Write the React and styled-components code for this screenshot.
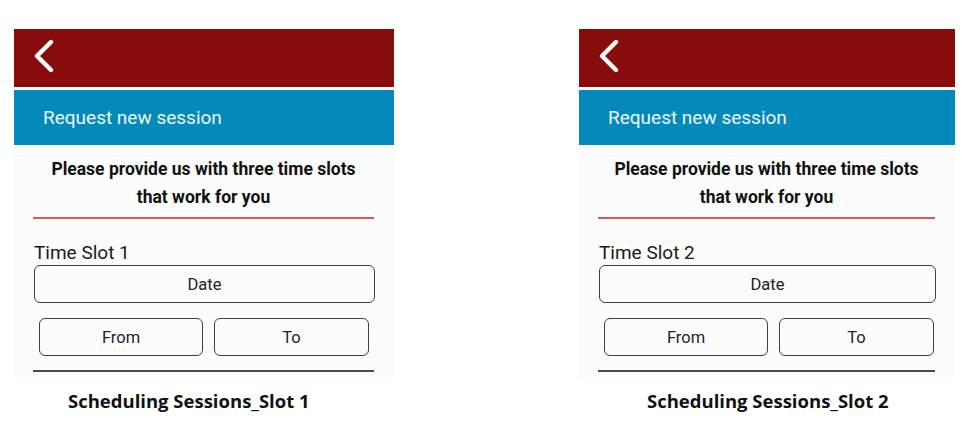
import React from "react";
import styled, { createGlobalStyle } from "styled-components";

const GlobalStyle = createGlobalStyle`
  body {
    margin: 0;
    background: #fff;
    font-family: Roboto, "Liberation Sans", Arial, sans-serif;
  }
`;

const slots = [
  { id: 1, width: 380, left: 14, captionLeft: 54 },
  { id: 2, width: 376, left: 185, captionLeft: 68 },
];

function BackIcon() {
  return (
    <svg width="24" height="34" viewBox="0 0 24 34">
      <path
        d="M18 3 L4 17 L18 31"
        fill="none"
        stroke="#fff"
        strokeWidth="4.4"
        strokeLinecap="round"
        strokeLinejoin="round"
      />
    </svg>
  );
}

function SlotScreen({ slot }) {
  return (
    <Column left={slot.left}>
      <Panel width={slot.width}>
        <TopBar>
          <BackIcon />
        </TopBar>
        <TitleBar>Request new session</TitleBar>
        <Body>
          <Heading>
            Please provide us with three time slots
            <br />
            that work for you
          </Heading>
          <RedRule />
          <SlotLabel>Time Slot {slot.id}</SlotLabel>
          <DateField>Date</DateField>
          <TimeRow>
            <TimeField>From</TimeField>
            <TimeField>To</TimeField>
          </TimeRow>
          <BottomRule />
        </Body>
      </Panel>
      <Caption left={slot.captionLeft}>Scheduling Sessions_Slot {slot.id}</Caption>
    </Column>
  );
}

export default function App() {
  return (
    <>
      <GlobalStyle />
      <Page>
        {slots.map((s) => (
          <SlotScreen key={s.id} slot={s} />
        ))}
      </Page>
    </>
  );
}

const Page = styled.div`
  display: flex;
  width: 980px;
  height: 423px;
  overflow: hidden;
`;

const Column = styled.div`
  display: flex;
  flex-direction: column;
  margin-left: ${({ left }) => left}px;
`;

const Panel = styled.div`
  width: ${({ width }) => width}px;
  margin-top: 29px;
  height: 349px;
  background: #fcfcfc;
  display: flex;
  flex-direction: column;
`;

const TopBar = styled.div`
  height: 58px;
  background: #860d0c;
  display: flex;
  align-items: center;
  padding-left: 19px;
  padding-bottom: 4px;
  box-sizing: border-box;
`;

const TitleBar = styled.div`
  margin-top: 3px;
  height: 55px;
  background: #0489bb;
  color: #eef6f9;
  font-size: 19px;
  display: flex;
  align-items: center;
  padding-left: 29px;
  padding-bottom: 1px;
  box-sizing: border-box;
`;

const Body = styled.div`
  padding: 10px 20px 0 19px;
`;

const Heading = styled.div`
  font-weight: 700;
  font-size: 17.5px;
  line-height: 28px;
  text-align: center;
  color: #111;
`;

const RedRule = styled.div`
  height: 2px;
  background: #d6585a;
  margin-top: 6px;
`;

const SlotLabel = styled.div`
  font-size: 19px;
  line-height: 22px;
  color: #1a1a1a;
  margin-top: 23px;
  margin-left: 1px;
`;

const Field = styled.div`
  border: 1.5px solid #3f3f3f;
  border-radius: 6px;
  box-sizing: border-box;
  display: flex;
  align-items: center;
  justify-content: center;
  font-size: 16.5px;
  color: #222;
`;

const DateField = styled(Field)`
  height: 38px;
  margin-top: 1px;
  margin-right: -1px;
  margin-left: 1px;
`;

const TimeRow = styled.div`
  display: grid;
  grid-template-columns: 164px 155px;
  column-gap: 11px;
  padding-left: 6px;
  margin-top: 15px;
`;

const TimeField = styled(Field)`
  height: 38px;
`;

const BottomRule = styled.div`
  height: 1.5px;
  background: #4a4a4a;
  margin-top: 14px;
`;

const Caption = styled.div`
  margin-top: 10px;
  margin-left: ${({ left }) => left}px;
  font-family: "Open Sans", Lato, sans-serif;
  font-weight: 700;
  font-size: 18.5px;
  color: #111;
`;
